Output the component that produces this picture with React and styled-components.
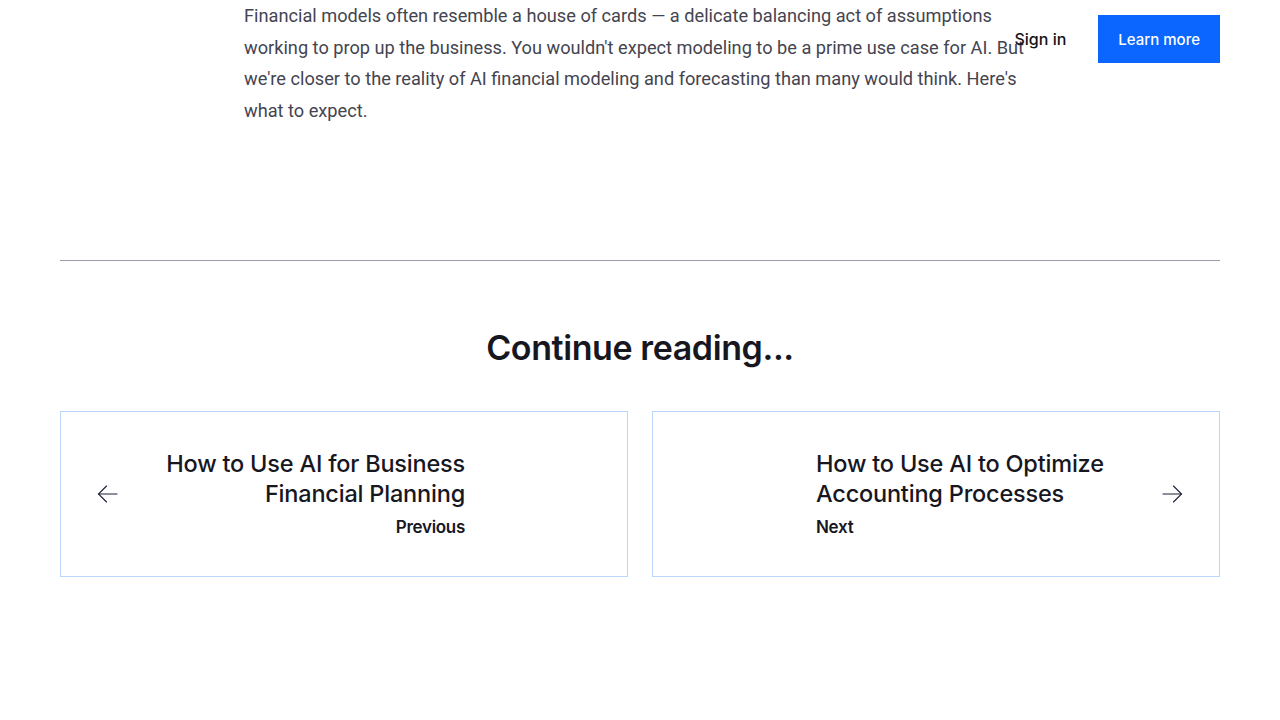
import React from "react"
import styled, { createGlobalStyle } from "styled-components"

const GlobalStyle = createGlobalStyle`
  html, body {
    margin: 0;
    padding: 0;
    background: #ffffff;
  }
  body {
    font-family: "Inter", "Roboto", "Liberation Sans", sans-serif;
    color: #16161f;
  }
`

const ArrowIcon = ({ dir }) => (
  <svg width="21" height="20" viewBox="0 0 21 20" fill="none">
    {dir === "left" ? (
      <g stroke="#1c1c3a" strokeWidth="1.1" strokeLinecap="round">
        <path d="M1.5 10 H20" />
        <path d="M9.5 2 L1.5 10 L9.5 18" />
      </g>
    ) : (
      <g stroke="#1c1c3a" strokeWidth="1.1" strokeLinecap="round">
        <path d="M1 10 H19.5" />
        <path d="M11.5 2 L19.5 10 L11.5 18" />
      </g>
    )}
  </svg>
)

const App = () => (
  <>
    <GlobalStyle />
    <Page>
      <Header>
        <SignIn href="#">Sign in</SignIn>
        <LearnMore href="#">Learn more</LearnMore>
      </Header>

      <Article>
        <Intro>
          Financial models often resemble a house of cards — a delicate balancing act of
          assumptions working to prop up the business. You wouldn't expect modeling to be a
          prime use case for AI. But we're closer to the reality of AI financial modeling and
          forecasting than many would think. Here's what to expect.
        </Intro>
      </Article>

      <Container>
        <Divider />
        <SectionTitle>Continue reading...</SectionTitle>
        <CardGrid>
          <Card href="#">
            <ArrowIcon dir="left" />
            <CardText align="right">
              <CardTitle>How to Use AI for Business Financial Planning</CardTitle>
              <CardLabel>Previous</CardLabel>
            </CardText>
          </Card>
          <Card href="#">
            <CardText align="left">
              <CardTitle>How to Use AI to Optimize Accounting Processes</CardTitle>
              <CardLabel>Next</CardLabel>
            </CardText>
            <ArrowIcon dir="right" />
          </Card>
        </CardGrid>
      </Container>
    </Page>
  </>
)

export default App

const Page = styled.div`
  position: relative;
  min-height: 720px;
  background: #ffffff;
`

const Header = styled.header`
  position: absolute;
  top: 15px;
  right: 60px;
  display: flex;
  align-items: center;
  gap: 32px;
  z-index: 2;
`

const SignIn = styled.a`
  font-family: "Inter", "Roboto", sans-serif;
  font-size: 16px;
  font-weight: 500;
  color: #111118;
  text-decoration: none;
`

const LearnMore = styled.a`
  display: flex;
  align-items: center;
  height: 48px;
  padding: 0 20px;
  background: #0a66ff;
  color: #ffffff;
  font-family: "Inter", "Roboto", sans-serif;
  font-size: 15px;
  font-weight: 500;
  text-decoration: none;
`

const Article = styled.div`
  max-width: 792px;
  margin: 0 auto;
`

const Intro = styled.p`
  margin: 0;
  font-family: "Roboto", "Liberation Sans", sans-serif;
  font-size: 18.2px;
  line-height: 31.5px;
  color: #44444f;
`

const Container = styled.div`
  max-width: 1160px;
  margin: 0 auto;
  padding-top: 134px;
  padding-bottom: 140px;
`

const Divider = styled.hr`
  margin: 0;
  border: 0;
  border-top: 1px solid #9d9daa;
`

const SectionTitle = styled.h2`
  margin: 64px 0 40px;
  text-align: center;
  font-family: "Inter", "Roboto", sans-serif;
  font-size: 34px;
  line-height: 46px;
  font-weight: 600;
  letter-spacing: -0.4px;
  color: #17171f;
`

const CardGrid = styled.div`
  display: grid;
  grid-template-columns: 1fr 1fr;
  gap: 24px;
`

const Card = styled.a`
  display: flex;
  align-items: center;
  height: 166px;
  box-sizing: border-box;
  padding: 0 36px;
  border: 1px solid #bcd5fb;
  text-decoration: none;
  color: inherit;
`

const CardText = styled.div`
  width: 330px;
  text-align: ${props => props.align};
  margin-left: ${props => (props.align === "right" ? "auto" : "127px")};
  margin-right: ${props => (props.align === "right" ? "126px" : "auto")};
`

const CardTitle = styled.h3`
  margin: 0 0 6px;
  font-family: "Inter", "Roboto", sans-serif;
  font-size: 23.5px;
  line-height: 30px;
  font-weight: 500;
  letter-spacing: -0.2px;
  color: #17171f;
`

const CardLabel = styled.div`
  font-family: "Inter", "Roboto", sans-serif;
  font-size: 17px;
  line-height: 24px;
  font-weight: 600;
  letter-spacing: -0.3px;
  color: #17171f;
`
